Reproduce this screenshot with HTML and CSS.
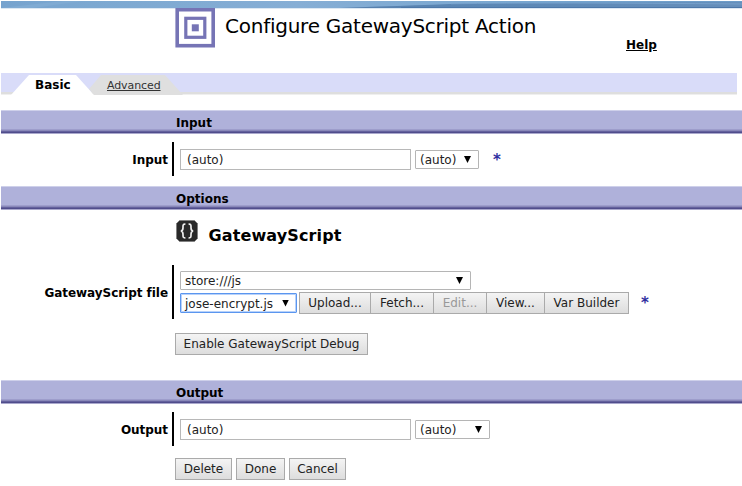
FILE: index.html
```html
<!DOCTYPE html>
<html lang="en">
<head>
<meta charset="utf-8">
<title>Configure GatewayScript Action</title>
<link rel="stylesheet" href="styles.css">
</head>
<body>
<svg class="banner" viewBox="0 0 741 8" preserveAspectRatio="none" aria-hidden="true">
  <defs>
    <linearGradient id="sky"><stop offset="0" stop-color="#76a3ce"/><stop offset=".12" stop-color="#7ca8d1"/><stop offset=".4" stop-color="#86aed5"/><stop offset=".75" stop-color="#76a5cf"/><stop offset="1" stop-color="#6b9bc8"/></linearGradient>
    <linearGradient id="wave"><stop offset="0" stop-color="#557eac"/><stop offset=".35" stop-color="#5b87b5"/><stop offset="1" stop-color="#668fbb"/></linearGradient>
  </defs>
  <rect width="741" height="7" fill="url(#sky)"/>
  <path d="M0 7L62 0H82L32 7Z" fill="#80abd3"/>
  <path d="M338 7Q420 4 480 2L741 1V7Z" fill="url(#wave)"/>
  <path d="M450 2.8Q550 1.2 741 3" fill="none" stroke="#79a5cf" stroke-width=".8"/>
  <path d="M400 6.5H741" stroke="#4c77a8" stroke-width="1"/>
  <rect y="7" width="741" height="1" fill="#dce7f2"/>
</svg>
<header class="header">
  <svg class="logo" viewBox="0 0 40 40" aria-hidden="true">
    <rect x="2.2" y="1.7" width="36" height="36" fill="#fff" stroke="#7674b5" stroke-width="3.6"/>
    <rect x="10.8" y="10.3" width="19" height="19" fill="#fff" stroke="#7674b5" stroke-width="3.2"/>
    <rect x="16.8" y="16.3" width="7" height="7" fill="#7674b5"/>
  </svg>
  <h1 class="title"><span>Configure GatewayScript Action</span></h1>
  <a class="help">Help</a>
</header>
<nav class="tabs">
  <a class="tab tab-active">Basic</a>
  <a class="tab tab-idle">Advanced</a>
</nav>

<h2 class="section">Input</h2>
<div class="row">
  <label class="label">Input</label>
  <div class="field">
    <div class="line">
      <div class="input">(auto)</div>
      <div class="select select-mode">(auto)<i class="arrow"></i></div>
      <span class="required">*</span>
    </div>
  </div>
</div>

<h2 class="section">Options</h2>
<div class="action">
  <svg class="braces" viewBox="0 0 22 22" aria-hidden="true">
    <path d="M3.5 .5H18.5L21.5 3.5V18.5L18.5 21.5H3.5L.5 18.5V3.5Z" fill="#292929" stroke="#777" stroke-width=".6"/>
    <path d="M9.4 4.2C6.7 4 7 5.5 7 7.7S6.8 10.8 4.8 11C6.8 11.2 7 12.2 7 14.3S6.7 18 9.4 17.8M12.6 4.2C15.3 4 15 5.5 15 7.7S15.2 10.8 17.2 11C15.2 11.2 15 12.2 15 14.3S15.3 18 12.6 17.8" fill="none" stroke="#eee" stroke-width="1.7"/>
  </svg>
  <h3 class="action-name">GatewayScript</h3>
</div>
<div class="row row-file">
  <label class="label">GatewayScript file</label>
  <div class="field">
    <div class="select select-store">store:///js<i class="arrow"></i></div>
    <div class="line line-file">
      <div class="select select-file">jose-encrypt.js<i class="arrow"></i></div>
      <div class="group">
        <button class="button upload">Upload...</button>
        <button class="button fetch">Fetch...</button>
        <button class="button edit" disabled>Edit...</button>
        <button class="button view">View...</button>
        <button class="button builder">Var Builder</button>
      </div>
      <span class="required">*</span>
    </div>
  </div>
</div>
<div class="debug"><button class="button debug-button">Enable GatewayScript Debug</button></div>

<h2 class="section">Output</h2>
<div class="row">
  <label class="label">Output</label>
  <div class="field">
    <div class="line">
      <div class="input">(auto)</div>
      <div class="select select-output">(auto)<i class="arrow"></i></div>
    </div>
  </div>
</div>
<footer class="actions">
  <button class="button delete">Delete</button>
  <button class="button done">Done</button>
  <button class="button cancel">Cancel</button>
</footer>
</body>
</html>
```

FILE: styles.css
```css
* { box-sizing: border-box; }
body {
  margin: 0;
  padding: 1px 0 0 1px;
  height: 486px;
  overflow: hidden;
  background: #fff;
  color: #000;
  font: 12px/16px Verdana, "DejaVu Sans", sans-serif;
}
h1, h2, h3 { margin: 0; }
.banner { display: block; width: 741px; height: 8px; }
.header { display: flex; height: 64px; padding-left: 174px; }
.logo { flex: none; width: 40px; height: 40px; margin-top: -1px; }
.title { width: 402px; padding: 4px 0 0 10px; font-size: 20px; font-weight: 400; line-height: 26px; white-space: nowrap; letter-spacing: -.25px; }
.help { margin: 28px 0 0 9px; font-size: 12px; font-weight: 700; text-decoration: underline; }

.tabs { display: flex; width: 736px; height: 22px; padding-left: 10px; background: linear-gradient(#d9dcf9 19px, #dedede 19px 21px, #efefef 21px); }
.tab { height: 20px; margin-top: 2px; line-height: 21px; }
.tab-active { width: 83px; padding-left: 24px; background: #fff; clip-path: polygon(18px 0, 65px 0, 100% 100%, 0 100%); font-weight: 700; }
.tab-idle { width: 94px; margin-left: -5px; padding-left: 18px; background: #dfdfdf; clip-path: polygon(12px 0, 76px 0, 100% 100%, 5px 100%, 0 14px); font-size: 11px; letter-spacing: -.1px; text-decoration: underline; color: #333; }

.section {
  height: 24px;
  padding-left: 175px;
  margin-top: 15px;
  background: linear-gradient(#ced0ea 1px, #afb1da 1px 19px, #9d9dcb 19px 20px, #8988b9 20px 21px, #64619d 21px 22px, #504d8b 22px 23px, #aaa8cd 23px);
  font-size: 12px;
  line-height: 26px;
}
.row { display: flex; align-items: stretch; height: 34px; margin-top: 8px; }
.label { width: 173px; padding: 2px 4px 0 0; border-right: 2px solid #000; display: flex; align-items: center; justify-content: flex-end; font-weight: 700; white-space: nowrap; letter-spacing: -.04px; }
.field { padding: 7px 0 0 6px; }
.line { display: flex; align-items: center; }
.input { width: 231px; height: 21px; margin-right: 4px; padding-left: 6px; border: 1px solid #b8b8b8; line-height: 20px; color: #222; }
.select { display: flex; align-items: center; justify-content: space-between; height: 19px; padding: 1px 7px 0 4px; border: 1px solid #b5b5b5; border-radius: 1px; background: #fff; color: #222; white-space: nowrap; }
.arrow { width: 7px; height: 7px; margin-top: -1px; background: #000; clip-path: polygon(0 0, 100% 0, 50% 100%); }
.select-mode { width: 64px; }
.select-output { width: 75px; }
.required { margin-left: 14px; color: #2e2ea0; font-size: 15px; font-weight: 700; line-height: 16px; }
.row + .section { margin-top: 10px; }

.action { display: flex; height: 47px; padding: 10px 0 0 174px; }
.braces { width: 22px; height: 22px; margin-left: .5px; }
.action-name { padding: 5px 0 0 11px; font-size: 16px; line-height: 22px; letter-spacing: .12px; }
.row-file { height: 54px; }
.row-file .field { padding-top: 6px; }
.select-store { width: 291px; }
.line-file { margin-top: 2px; }
.select-file { width: 117px; height: 20px; border-color: #5b96ef; outline: 1px solid #b8d2fa; outline-offset: -2px; }
.group { display: flex; margin-left: 2px; }
.button { height: 22px; padding: 0; border: 1px solid #aaa; background: linear-gradient(#f4f4f4, #ddd); font: inherit; color: #222; white-space: nowrap; }
.button:disabled { color: #999; }
.group .button + .button { margin-left: -1px; }
.upload { width: 72px; }
.fetch { width: 64px; }
.edit { width: 54px; }
.view { width: 59px; }
.builder { width: 85px; }
.group + .required { margin-left: 12px; }
.debug { display: flex; padding: 14px 0 0 174px; }
.debug-button { width: 193px; }
.debug + .section { margin-top: 25px; }
.actions { display: flex; gap: 4px; padding: 12px 0 0 174px; }
.delete { width: 57px; }
.done { width: 49px; }
.cancel { width: 57px; }
```
